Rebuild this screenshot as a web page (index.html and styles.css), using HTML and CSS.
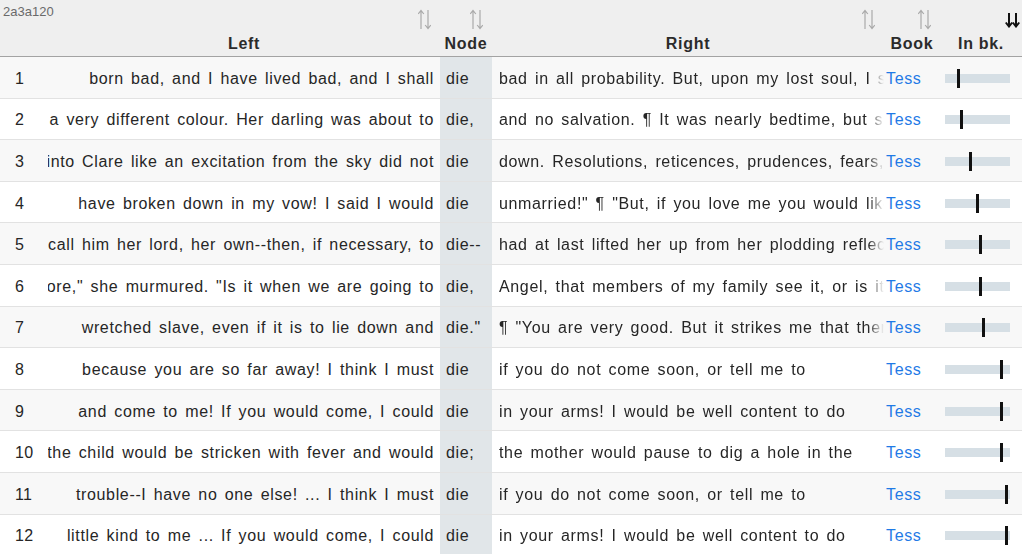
FILE: index.html
```html
<!DOCTYPE html>
<html>
<head>
<meta charset="utf-8">
<link rel="stylesheet" href="styles.css">
</head>
<body>
<div class="table">
  <div class="head">
    <div class="hcell hidx"><span class="code">2a3a120</span></div>
    <div class="hcell">
      <svg class="sort" width="13" height="21" viewBox="0 0 13 21"><path d="M3 20V1.5M0.2 5L3 1.5L5.8 5M10 1V19.5M7.2 16L10 19.5L12.8 16" fill="none" stroke="#a9a9a9" stroke-width="1.2"/></svg>
      <span class="label">Left</span>
    </div>
    <div class="hcell">
      <svg class="sort" width="13" height="21" viewBox="0 0 13 21"><path d="M3 20V1.5M0.2 5L3 1.5L5.8 5M10 1V19.5M7.2 16L10 19.5L12.8 16" fill="none" stroke="#a9a9a9" stroke-width="1.2"/></svg>
      <span class="label">Node</span>
    </div>
    <div class="hcell">
      <svg class="sort" width="13" height="21" viewBox="0 0 13 21"><path d="M3 20V1.5M0.2 5L3 1.5L5.8 5M10 1V19.5M7.2 16L10 19.5L12.8 16" fill="none" stroke="#a9a9a9" stroke-width="1.2"/></svg>
      <span class="label">Right</span>
    </div>
    <div class="hcell">
      <svg class="sort" width="13" height="21" viewBox="0 0 13 21"><path d="M3 20V1.5M0.2 5L3 1.5L5.8 5M10 1V19.5M7.2 16L10 19.5L12.8 16" fill="none" stroke="#a9a9a9" stroke-width="1.2"/></svg>
      <span class="label">Book</span>
    </div>
    <div class="hcell">
      <svg class="sort sortdown" width="15" height="16" viewBox="0 0 15 16"><path d="M4 1V14M0.8 10.5L4 14.5L7.2 10.5M11 1V14M7.8 10.5L11 14.5L14.2 10.5" fill="none" stroke="#111" stroke-width="2"/></svg>
      <span class="label">In bk.</span>
    </div>
  </div>

  <div class="row odd">
    <div class="idx">1</div>
    <div class="left"><span>born bad, and I have lived bad, and I shall</span></div>
    <div class="node">die</div>
    <div class="right"><span>bad in all probability. But, upon my lost soul, I shan't die bad</span></div>
    <div class="book">Tess</div>
    <div class="inbk"><div class="bar"><i style="left:18%"></i></div></div>
  </div>
  <div class="row">
    <div class="idx">2</div>
    <div class="left"><span>she wore a very different colour. Her darling was about to</span></div>
    <div class="node">die,</div>
    <div class="right"><span>and no salvation. ¶ It was nearly bedtime, but she</span></div>
    <div class="book">Tess</div>
    <div class="inbk"><div class="bar"><i style="left:23%"></i></div></div>
  </div>
  <div class="row odd">
    <div class="idx">3</div>
    <div class="left"><span>came into Clare like an excitation from the sky did not</span></div>
    <div class="node">die</div>
    <div class="right"><span>down. Resolutions, reticences, prudences, fears, fell back</span></div>
    <div class="book">Tess</div>
    <div class="inbk"><div class="bar"><i style="left:37%"></i></div></div>
  </div>
  <div class="row">
    <div class="idx">4</div>
    <div class="left"><span>have broken down in my vow! I said I would</span></div>
    <div class="node">die</div>
    <div class="right"><span>unmarried!" ¶ "But, if you love me you would like</span></div>
    <div class="book">Tess</div>
    <div class="inbk"><div class="bar"><i style="left:47%"></i></div></div>
  </div>
  <div class="row odd">
    <div class="idx">5</div>
    <div class="left"><span>and call him her lord, her own--then, if necessary, to</span></div>
    <div class="node">die--</div>
    <div class="right"><span>had at last lifted her up from her plodding reflection</span></div>
    <div class="book">Tess</div>
    <div class="inbk"><div class="bar"><i style="left:52%"></i></div></div>
  </div>
  <div class="row">
    <div class="idx">6</div>
    <div class="left"><span>"Not before," she murmured. "Is it when we are going to</span></div>
    <div class="node">die,</div>
    <div class="right"><span>Angel, that members of my family see it, or is it</span></div>
    <div class="book">Tess</div>
    <div class="inbk"><div class="bar"><i style="left:53%"></i></div></div>
  </div>
  <div class="row odd">
    <div class="idx">7</div>
    <div class="left"><span>wretched slave, even if it is to lie down and</span></div>
    <div class="node">die."</div>
    <div class="right"><span>¶ "You are very good. But it strikes me that there</span></div>
    <div class="book">Tess</div>
    <div class="inbk"><div class="bar"><i style="left:57%"></i></div></div>
  </div>
  <div class="row">
    <div class="idx">8</div>
    <div class="left"><span>because you are so far away! I think I must</span></div>
    <div class="node">die</div>
    <div class="right"><span>if you do not come soon, or tell me to</span></div>
    <div class="book">Tess</div>
    <div class="inbk"><div class="bar"><i style="left:84%"></i></div></div>
  </div>
  <div class="row odd">
    <div class="idx">9</div>
    <div class="left"><span>and come to me! If you would come, I could</span></div>
    <div class="node">die</div>
    <div class="right"><span>in your arms! I would be well content to do</span></div>
    <div class="book">Tess</div>
    <div class="inbk"><div class="bar"><i style="left:84%"></i></div></div>
  </div>
  <div class="row">
    <div class="idx">10</div>
    <div class="left"><span>fearing the child would be stricken with fever and would</span></div>
    <div class="node">die;</div>
    <div class="right"><span>the mother would pause to dig a hole in the</span></div>
    <div class="book">Tess</div>
    <div class="inbk"><div class="bar"><i style="left:84%"></i></div></div>
  </div>
  <div class="row odd">
    <div class="idx">11</div>
    <div class="left"><span>trouble--I have no one else! ... I think I must</span></div>
    <div class="node">die</div>
    <div class="right"><span>if you do not come soon, or tell me to</span></div>
    <div class="book">Tess</div>
    <div class="inbk"><div class="bar"><i style="left:92%"></i></div></div>
  </div>
  <div class="row">
    <div class="idx">12</div>
    <div class="left"><span>little kind to me ... If you would come, I could</span></div>
    <div class="node">die</div>
    <div class="right"><span>in your arms! I would be well content to do</span></div>
    <div class="book">Tess</div>
    <div class="inbk"><div class="bar"><i style="left:92%"></i></div></div>
  </div>
</div>
</body>
</html>
```

FILE: styles.css
```css
html, body {
  margin: 0;
  padding: 0;
  background: #ffffff;
}
body {
  font-family: "Liberation Sans", Arial, sans-serif;
  font-size: 16px;
  color: #262626;
  overflow: hidden;
}
.table {
  width: 1022px;
}
.head, .row {
  display: grid;
  grid-template-columns: 48px 392px 52px 392px 56px 82px;
}
.head {
  height: 57px;
  box-sizing: border-box;
  background: #efefef;
  border-bottom: 1.5px solid #a3a3a3;
}
.hcell {
  position: relative;
  display: flex;
  flex-direction: column;
  align-items: center;
  justify-content: flex-end;
  padding-bottom: 3px;
  box-sizing: border-box;
}
.hidx {
  align-items: flex-start;
  justify-content: flex-start;
  padding: 4px 0 0 3px;
}
.code {
  font-size: 13px;
  color: #6a6a6a;
  white-space: nowrap;
}
.label {
  font-weight: bold;
  color: #2b2b2b;
  line-height: 18px;
  letter-spacing: 0.7px;
}
.sort {
  align-self: flex-end;
  margin: 0 9px 5px 0;
}
.sortdown {
  margin: 0 2px 7px 0;
}
.row {
  height: 41.6px;
  box-sizing: border-box;
  border-bottom: 1.5px solid #e2e2e2;
  background: #ffffff;
  align-items: stretch;
  letter-spacing: 0.65px;
  word-spacing: 2.2px;
}
.row.odd {
  background: #f8f8f8;
}
.row > div {
  display: flex;
  align-items: center;
  white-space: nowrap;
  overflow: hidden;
  padding-top: 3px;
  box-sizing: border-box;
}
.idx {
  padding-left: 15px;
  letter-spacing: 0.4px;
}
.left {
  justify-content: flex-end;
  padding-right: 6px;
}
.left span {
  flex: none;
}
.node {
  background: #e1e6e9;
  padding-left: 6px;
}
.right {
  padding-left: 7px;
  -webkit-mask-image: linear-gradient(to right, #000 calc(100% - 16px), transparent);
  mask-image: linear-gradient(to right, #000 calc(100% - 16px), transparent);
}
.right span {
  flex: none;
}
.book {
  color: #1f7ae6;
  padding-left: 2px;
}
.inbk {
  padding-left: 5px;
}
.bar {
  position: relative;
  width: 65px;
  height: 9px;
  margin-top: -1px;
  background: #d6dfe5;
}
.bar i {
  position: absolute;
  top: -5px;
  width: 3px;
  height: 19px;
  background: #111;
}
```
